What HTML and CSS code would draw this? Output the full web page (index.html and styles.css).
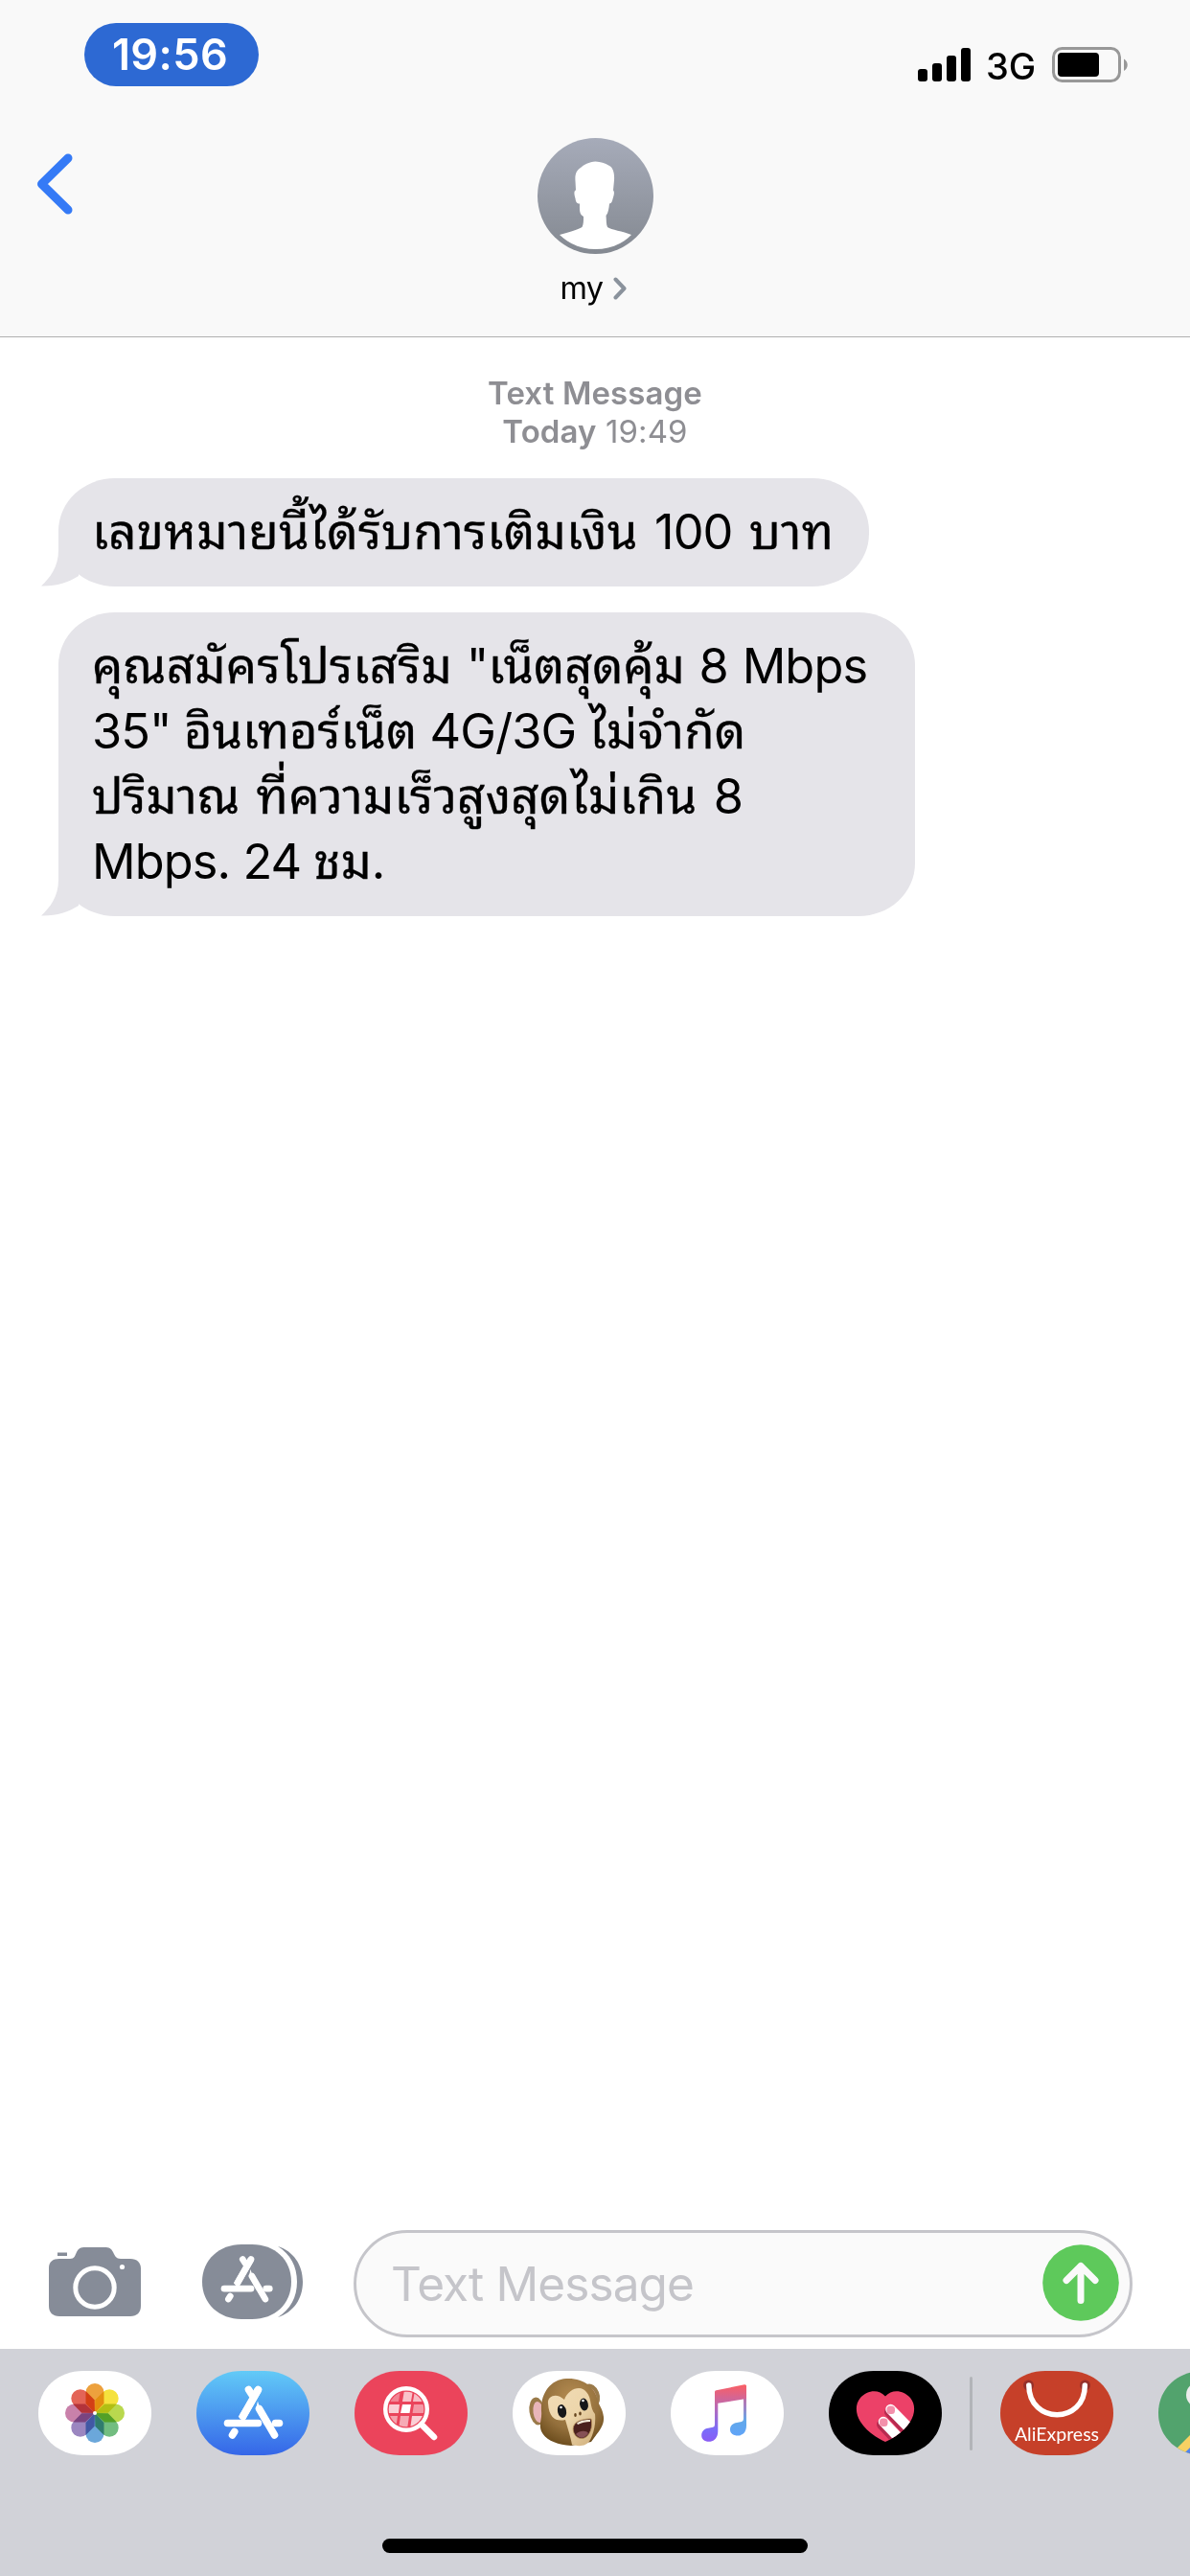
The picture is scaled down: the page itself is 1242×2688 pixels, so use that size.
FILE: index.html
```html
<!DOCTYPE html>
<html lang="th">
<head>
  <meta charset="UTF-8" />
  <title>my</title>
  <meta name="viewport" content="width=device-width, initial-scale=1.0" />
  <link rel="stylesheet" href="styles.css">
</head>
<body>
  <div class="screen">
    <header class="header">
      <div class="status-bar">
        <div class="time-pill"><span>19:56</span></div>
        <div class="status-icons">
          <svg class="signal" viewBox="0 0 56 36">
            <rect x="0" y="22" width="10" height="13" rx="3"/>
            <rect x="15" y="16" width="10" height="19" rx="3"/>
            <rect x="30" y="8" width="10" height="27" rx="3"/>
            <rect x="45" y="0" width="10" height="35" rx="3"/>
          </svg>
          <span class="network">3G</span>
          <svg class="battery" viewBox="0 0 80 38">
            <rect x="1.5" y="1.5" width="69" height="34" rx="9" fill="none" stroke="#989898" stroke-width="3"/>
            <rect x="6" y="6" width="43" height="25" rx="4"/>
            <path d="M75 12.500 C80 15 80 22.500 75 25 Z" fill="#989898"/>
          </svg>
        </div>
      </div>
      <div class="nav">
        <svg class="back" viewBox="0 0 38 64"><path d="M33 5 L5.500 32 L33 59"/></svg>
        <div class="contact">
          <svg class="avatar" viewBox="0 0 121 121">
            <defs>
              <linearGradient id="avatarBg" x1="0" y1="0" x2="0" y2="1">
                <stop offset="0" stop-color="#a6abb9"/>
                <stop offset="1" stop-color="#848991"/>
              </linearGradient>
            </defs>
            <circle cx="60.5" cy="60.5" r="60.5" fill="url(#avatarBg)"/>
            <path fill="#fff" d="M60.500 24.500 C54 25 48 28 45 31 C40 34 39 39 39.500 45 L40 54.500 C37.500 55 38.500 60 39.500 63 C40 67 41 68.500 44 68.500 C44 73 43.500 78 46 80.500 L48 82 C48 87 48 90 46.500 93 C42 96 33 98 23 101 C34 111 46 116 60.500 116 C75 116 88 111 98 101 C89 97 77 96 73 93 C71.500 90 72 86 71.500 81 C74 78 74.500 73 75 68.500 C78 68 78 65 79 62 C80 59 80.500 56 79 54.500 L80 44 C80.500 37 79 31 75 29 C70 26 66 25 60.500 24.500Z"/>
          </svg>
          <div class="contact-name">
            <span>my</span>
            <svg viewBox="0 0 14 24"><path d="M2.500 2.500 L11.500 12 L2.500 21.500"/></svg>
          </div>
        </div>
      </div>
    </header>

    <main class="thread">
      <div class="stamp">
        <div class="stamp-type">Text Message</div>
        <div><b>Today</b> 19:49</div>
      </div>

      <div class="bubble bubble-one">
        <svg class="tail" viewBox="0 0 39 60"><path d="M18 0 V22 C18 40 9 51 0 59.500 C15 60 28 56 39 49 V0Z"/></svg>
        <div class="line"><span class="th">เลขหมายนี้ได้รับการเติมเงิน</span> 100 <span class="th">บาท</span></div>
      </div>

      <div class="bubble bubble-two">
        <svg class="tail" viewBox="0 0 39 60"><path d="M18 0 V22 C18 40 9 51 0 59.500 C15 60 28 56 39 49 V0Z"/></svg>
        <div class="line line-first"><span class="th">คุณสมัครโปรเสริม</span> "<span class="th th-tight">เน็ตสุดคุ้ม</span> 8 Mbps</div>
        <div class="line line-tight">35" <span class="th th-tight">อินเทอร์เน็ต</span> 4G/3G <span class="th">ไม่จำกัด</span></div>
        <div class="line"><span class="th th-tight">ปริมาณ</span> <span class="th">ที่ความเร็วสูงสุดไม่เกิน</span> 8</div>
        <div class="line line-tight">Mbps. 24 <span class="th th-tight">ชม</span>.</div>
      </div>
    </main>

    <div class="composer">
      <svg class="camera" viewBox="0 0 96 72">
        <path fill="#868c98" d="M9 5.500 H19 V9 H9Z M0 22 C0 15 4 12 11 12 H22 C27 12 27 9 29 5 C31 1 33 0 38 0 H58 C63 0 65 1 67 5 C69 9 70 12 75 12 H85 C92 12 96 16 96 22 V61 C96 68 92 72 85 72 H11 C4 72 0 68 0 61Z"/>
        <circle cx="48" cy="42" r="20.200" fill="none" stroke="#fff" stroke-width="5"/>
        <circle cx="76.500" cy="20.500" r="2.600" fill="#fff"/>
      </svg>
      <svg class="drawer" viewBox="0 0 105 78">
        <path fill="#868c98" d="M0 39 C0 16 18 0 41 0 H52 C76 0 93 16 93 39 C93 62 76 78 52 78 H41 C18 78 0 62 0 39Z"/>
        <path fill="#868c98" d="M79 2 C95 7 105 21 105 39 C105 57 95 71 79 76 C92 68 99 55 99 39 C99 23 92 10 79 2Z"/>
        <g transform="translate(19.500 12)"><use href="#appStoreA" transform="scale(.875)"/></g>
      </svg>
      <div class="field">
        <span>Text Message</span>
        <svg class="send" viewBox="0 0 80 80">
          <circle cx="40" cy="40" r="39.800" fill="#5ec95b"/>
          <path d="M40 58.500 V22.500 M25 37.500 L40 22.500 L55 37.500"/>
        </svg>
      </div>
    </div>

    <footer class="dock">
      <svg width="0" height="0" class="defs">
        <defs>
          <path id="pill" d="M0 44 C0 18 21 0 47 0 H71 C97 0 118 18 118 44 C118 70 97 88 71 88 H47 C21 88 0 70 0 44Z"/>
          <clipPath id="pillClip"><use href="#pill"/></clipPath>
          <g id="appStoreA" fill="none" stroke="#fff" stroke-width="7.600" stroke-linecap="round">
            <path d="M26 4 L29.500 9.500"/>
            <path d="M36 4 L18.500 34.500" stroke-linecap="butt"/>
            <path d="M36 4 L20 32"/>
            <path d="M4 39 H36"/>
            <path d="M54 39 H58"/>
            <path d="M37 24 L53 51.500"/>
            <path d="M11.200 48 L9 51.500"/>
            <path d="M35.500 16 L33.500 24 L43 42" stroke="none" fill="#fff"/>
          </g>
          <linearGradient id="storeBg" x1="0" y1="0" x2="0" y2="1">
            <stop offset="0" stop-color="#62caf7"/>
            <stop offset="1" stop-color="#3566e8"/>
          </linearGradient>
          <linearGradient id="noteBg" x1=".5" y1="0" x2=".5" y2="1">
            <stop offset="0" stop-color="#fb5f63"/>
            <stop offset=".45" stop-color="#b06bc0"/>
            <stop offset=".8" stop-color="#7a6cfa"/>
            <stop offset="1" stop-color="#8a5cf4"/>
          </linearGradient>
          <linearGradient id="noteRight" x1="0" y1="0" x2="0" y2="1">
            <stop offset="0" stop-color="#d85b7e"/>
            <stop offset=".4" stop-color="#a77fc0"/>
            <stop offset=".7" stop-color="#62a8ea"/>
            <stop offset="1" stop-color="#60a4f8"/>
          </linearGradient>
          <radialGradient id="fur" cx=".5" cy=".3" r=".75">
            <stop offset="0" stop-color="#b68d52"/>
            <stop offset=".6" stop-color="#94703c"/>
            <stop offset="1" stop-color="#674819"/>
          </radialGradient>
          <linearGradient id="face" x1="0" y1="0" x2="1" y2="1">
            <stop offset="0" stop-color="#f1dcb6"/>
            <stop offset=".5" stop-color="#edd6ab"/>
            <stop offset="1" stop-color="#cfae7a"/>
          </linearGradient>
          <path id="petal" d="M-9.500 -21.500 A9.500 9.500 0 0 1 9.500 -21.500 V-10 L0 0 L-9.500 -10Z"/>
        </defs>
      </svg>

      <div class="apps">
        <svg class="app" viewBox="0 0 118 88">
          <use href="#pill" fill="#fff"/>
          <g transform="translate(59 44)" class="petals">
            <use href="#petal" fill="#eda13d"/>
            <use href="#petal" fill="#f5e23d" transform="rotate(45)"/>
            <use href="#petal" fill="#b9d84e" transform="rotate(90)"/>
            <use href="#petal" fill="#72bd80" transform="rotate(135)"/>
            <use href="#petal" fill="#6ba7da" transform="rotate(180)"/>
            <use href="#petal" fill="#9b86c0" transform="rotate(225)"/>
            <use href="#petal" fill="#c981aa" transform="rotate(270)"/>
            <use href="#petal" fill="#e36457" transform="rotate(315)"/>
          </g>
          <circle cx="59" cy="44" r="2" fill="#fff"/>
        </svg>

        <svg class="app" viewBox="0 0 118 88">
          <use href="#pill" fill="url(#storeBg)"/>
          <use href="#appStoreA" transform="translate(28.500 15.500)"/>
        </svg>

        <svg class="app" viewBox="0 0 118 88">
          <use href="#pill" fill="#eb445b"/>
          <clipPath id="lens"><circle cx="54" cy="40" r="18.300"/></clipPath>
          <g clip-path="url(#lens)" fill="#fff">
            <path opacity=".35" d="M34 20 H48 L46 32 H34Z"/>
            <path opacity=".68" d="M52 20 H61 L59 32 H50Z"/>
            <path opacity=".65" d="M63 20 H76 V32 H61Z"/>
            <path opacity=".75" d="M34 35 H47 L46 44 H34Z"/>
            <path d="M50 35 H59 L57.500 44 H48Z"/>
            <path opacity=".45" d="M62 35 H76 V44 H60.500Z"/>
            <path opacity=".5" d="M34 47 H45 L43 61 H34Z"/>
            <path opacity=".55" d="M48 47 H57 L55 61 H46Z"/>
            <path opacity=".75" d="M60 47 H76 V61 H58Z"/>
          </g>
          <circle cx="54" cy="40" r="21.800" fill="none" stroke="#fff" stroke-width="4.400"/>
          <path d="M70 56 L83 69" fill="none" stroke="#fff" stroke-width="6.500" stroke-linecap="round"/>
        </svg>

        <svg class="app" viewBox="0 0 118 88">
          <use href="#pill" fill="#fff"/>
          <ellipse cx="25.500" cy="42" rx="8" ry="14.500" transform="rotate(-8 25.500 42)" fill="#9a7a4a"/>
          <ellipse cx="27" cy="43" rx="5.500" ry="11" transform="rotate(-8 27 43)" fill="#e9b5b9"/>
          <ellipse cx="82.500" cy="25" rx="8" ry="12" transform="rotate(-22 82.500 25)" fill="#9a7a4a"/>
          <ellipse cx="82" cy="26" rx="5" ry="9" transform="rotate(-22 82 26)" fill="#e9b5b9"/>
          <path fill="url(#fur)" d="M56 8 C39 9 29 24 30 42 C31 50 27 55 30 63 C34 72 46 77 61 78 L82 74 C88 65 96 58 95 48 C94 39 90 36 89 31 C86 17 74 7 56 8Z"/>
          <path fill="url(#face)" d="M37 34 C36 26 46 22 54 30 C58 19 71 14 77 22 C83 28 80 38 86 45 C87 55 85 64 81 72 C77 79 69 79 62 77 C60 67 57 58 55 51 C46 53 38 50 37 34Z"/>
          <ellipse cx="51.500" cy="42" rx="4.500" ry="7" transform="rotate(-12 51.500 42)" fill="#17181a"/>
          <ellipse cx="74.500" cy="35" rx="4.300" ry="6.500" transform="rotate(-12 74.500 35)" fill="#17181a"/>
          <circle cx="50.500" cy="38" r="1.300" fill="#fff"/>
          <circle cx="73.500" cy="31" r="1.300" fill="#fff"/>
          <ellipse cx="65.500" cy="46" rx="1.300" ry="1.900" fill="#66451f"/>
          <ellipse cx="70.500" cy="44.500" rx="1.300" ry="1.900" fill="#66451f"/>
          <path fill="#4a201d" stroke="#b6905b" stroke-width=".8" d="M63.500 58 C66 51 76 50 82 50 C84 58 81 69 73 70.500 C66 71 62 64 63.500 58Z"/>
          <path fill="#865055" d="M66 66 C70 62 77 62 79 65 C75 71 70 71 66 66Z"/>
          <path fill="#f3ead9" d="M67 54.500 C72 51 77 51 81 51 L81 53 C76 53 72 54 68 56Z"/>
        </svg>

        <svg class="app" viewBox="0 0 118 88">
          <use href="#pill" fill="#fff"/>
          <path fill="url(#noteRight)" d="M76 30 V29 Q76 28 75 28.500 L75 18 L79 15 V57 C79 64 75 67.500 70 67.500 C65 67.500 62 65 62 61 C62 57 65 54.500 69 54 L74 53 Q76 52.500 76 50Z"/>
          <path fill="url(#noteBg)" d="M46 22 Q46 20.500 47.500 20.200 L77 14.300 Q79 14 79 16 V29 L49.300 33.800 V63 C49.300 70 45 73.800 40 73.800 C35 73.800 32.200 71 32.200 67.500 C32.200 63 35 60.500 39 59.800 L44 58.800 Q46 58.400 46 56Z"/>
        </svg>

        <svg class="app" viewBox="0 0 118 88">
          <use href="#pill" fill="#000"/>
          <clipPath id="heart"><path d="M59 26.500 C52 18.500 40 20 33 28 C27 35 28 45 33 53 C39 62 48 69 59 74 C70 69 79 62 85 53 C90 45 91 35 85 28 C78 20 66 18.500 59 26.500Z"/></clipPath>
          <g clip-path="url(#heart)">
            <rect width="118" height="88" fill="#ec4168"/>
            <path d="M55 56 L71 73 M63 43 L84 66" stroke="#b72b50" stroke-width="10" stroke-linecap="round"/>
            <path d="M57 53 L77 74 M64.500 40 L88 64" stroke="#fff" stroke-width="10.500" stroke-linecap="round"/>
            <rect x="53" y="49.500" width="8.500" height="8.500" rx="3.500" fill="#f390ab"/>
            <rect x="60.500" y="36.500" width="8.500" height="8.500" rx="3.500" fill="#f390ab"/>
          </g>
        </svg>

        <div class="divider"></div>

        <div class="app ali">
          <svg viewBox="0 0 118 88">
            <use href="#pill" fill="#c64029"/>
            <circle cx="29.500" cy="15" r="5.500" fill="#95302a"/>
            <circle cx="88.500" cy="15" r="5.500" fill="#95302a"/>
            <path d="M29.800 15 C30 56 88.500 56 88.300 15" fill="none" stroke="#fff" stroke-width="5.500" stroke-linecap="round"/>
          </svg>
          <span class="ali-name">AliExpress</span>
        </div>

        <svg class="app" viewBox="0 0 118 88">
          <g clip-path="url(#pillClip)">
            <rect width="118" height="88" fill="#52a36d"/>
            <path d="M18 82 L52 48 V88 H18Z" fill="#f8d163"/>
            <path d="M25 88 L45 68 V88Z" fill="#5283ec"/>
            <circle cx="42" cy="25" r="13" fill="#ececec"/>
          </g>
        </svg>
      </div>
      <div class="home-bar"></div>
    </footer>
  </div>
</body>
</html>
```

FILE: styles.css
```css
* {
  box-sizing: border-box;
}

body {
  margin: 0;
  background: #fff;
  color: #000;
  font-family: Inter, "Noto Sans Thai Looped", "Noto Sans Thai", "Noto Sans", sans-serif;
}

svg {
  display: block;
  flex: none;
}

.screen {
  width: 1242px;
  height: 2688px;
  display: flex;
  flex-direction: column;
  overflow: hidden;
}

/* header */
.header {
  height: 352px;
  background: #f9f9f9;
  border-bottom: 1px solid #b0b0b0;
}

.status-bar {
  height: 144px;
  padding: 24px 64px 0 88px;
  display: flex;
  justify-content: space-between;
  align-items: flex-start;
}

.time-pill {
  width: 182px;
  height: 66px;
  border-radius: 33px;
  background: #2d69d3;
  color: #fff;
  font-size: 45px;
  font-weight: 600;
  letter-spacing: 0.4px;
  line-height: 66px;
  text-align: center;
}

.time-pill span {
  margin-left: -3px;
}

.status-icons {
  height: 38px;
  display: flex;
  align-items: center;
  margin-top: 25px;
}

.signal {
  width: 56px;
  height: 36px;
}

.network {
  width: 50px;
  margin: 2px 19px 0 15px;
  font-size: 38px;
  line-height: 38px;
  font-weight: 500;
  white-space: nowrap;
}

.battery {
  width: 80px;
  height: 38px;
}

.nav {
  display: grid;
  grid-template-columns: 200px 1fr 200px;
}

.back {
  width: 38px;
  height: 64px;
  margin: 16px 0 0 38px;
}

.back path {
  fill: none;
  stroke: #357af6;
  stroke-width: 9;
  stroke-linecap: round;
  stroke-linejoin: round;
}

.contact {
  display: flex;
  flex-direction: column;
  align-items: center;
}

.avatar {
  width: 121px;
  height: 121px;
}

.contact-name {
  display: flex;
  align-items: center;
  gap: 10px;
  margin-top: 15px;
  padding-right: 4px;
  font-size: 32.5px;
  letter-spacing: -0.6px;
  line-height: 42px;
}

.contact-name svg {
  width: 14px;
  height: 24px;
}

.contact-name path {
  fill: none;
  stroke: #8a929c;
  stroke-width: 4;
  stroke-linecap: round;
  stroke-linejoin: round;
}

/* messages */
.thread {
  flex: 1;
  padding: 38px 0 0 61px;
}

.stamp {
  width: 1120px;
  height: 109px;
  text-align: center;
  font-size: 33px;
  letter-spacing: 0.1px;
  line-height: 40px;
  color: #8e8e93;
}

.stamp b,
.stamp-type {
  font-weight: 600;
}

.bubble {
  position: relative;
  padding: 22px 0 0 35px;
  background: #e5e4e9;
  border-radius: 59px / 55px;
  font-size: 50.5px;
  letter-spacing: -0.9px;
  line-height: 68px;
}

.bubble-one {
  width: 846px;
  height: 113px;
  margin-bottom: 27px;
}

.bubble-two {
  width: 894px;
  height: 317px;
}

.line {
  position: relative;
  height: 68px;
  white-space: nowrap;
  word-spacing: 4px;
}

.line-first {
  word-spacing: 1.5px;
}

.line-tight {
  word-spacing: 0;
}

/* Thai runs are a touch heavier than the Latin ones */
.th {
  font-size: 51px;
  letter-spacing: 0.2px;
  -webkit-text-stroke: 0.3px #000;
}

.th-tight {
  font-size: 50.5px;
  letter-spacing: 0;
}

.tail {
  position: absolute;
  left: -18px;
  bottom: 0;
  width: 39px;
  height: 60px;
  fill: #e5e4e9;
}

/* text entry */
.composer {
  height: 124px;
  padding: 0 60px 0 51px;
  display: flex;
  align-items: flex-start;
}

.camera {
  width: 96px;
  height: 72px;
  margin: 18px 64px 0 0;
}

.drawer {
  width: 105px;
  height: 78px;
  margin: 15px 53px 0 0;
}

.field {
  width: 813px;
  height: 112px;
  padding: 0 11px 0 36px;
  border: 3px solid #c5c5ca;
  border-radius: 56px;
  background: #fafafa;
  color: #c5c5ca;
  font-size: 49.5px;
  letter-spacing: -0.9px;
  display: flex;
  align-items: center;
  justify-content: space-between;
}

.send {
  width: 80px;
  height: 80px;
  margin-top: -3px;
}

.send path {
  fill: none;
  stroke: #fafafa;
  stroke-width: 7;
  stroke-linecap: round;
  stroke-linejoin: round;
}

/* app strip */
.dock {
  height: 237px;
  background: #d1d2d8;
}

.defs {
  position: absolute;
}

.apps {
  height: 198px;
  padding: 23px 0 0 40px;
  display: flex;
  gap: 47px;
  overflow: hidden;
}

.app {
  width: 118px;
  height: 88px;
  flex: none;
}

.petals use {
  mix-blend-mode: multiply;
}

.divider {
  flex: none;
  width: 3px;
  height: 77px;
  margin: 6px -18px 0;
  border-radius: 2px;
  background: #b2b4b8;
}

.ali {
  position: relative;
}

.ali-name {
  position: absolute;
  left: 0;
  top: 55px;
  width: 118px;
  text-align: center;
  color: #fff;
  font-family: Lato, sans-serif;
  font-size: 19.5px;
  line-height: 22px;
}

.home-bar {
  width: 444px;
  height: 15px;
  margin: 0 auto;
  border-radius: 8px;
  background: #000;
}
```
